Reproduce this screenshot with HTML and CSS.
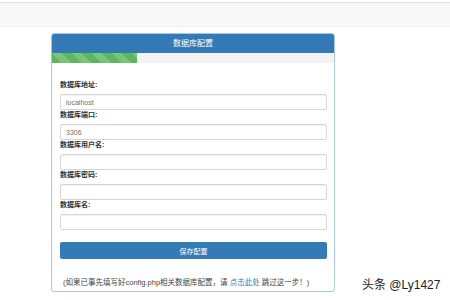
FILE: index.html
```html
<!doctype html>
<html lang="zh-CN">
<head>
  <meta charset="utf-8" />
  <meta name="viewport" content="width=device-width, initial-scale=1" />
  <title>数据库配置</title>
  <link rel="stylesheet" href="styles.css">
</head>

<body>
  <div class="topbar"></div>

  <main class="panel">
    <div class="panelHead">数据库配置</div>
    <div class="progress"><div class="progressBar" style="width:30%"></div></div>

    <form class="panelBody" onsubmit="return false">
      <label class="field">
        <span class="label">数据库地址:</span>
        <input class="input" type="text" value="localhost">
      </label>
      <label class="field">
        <span class="label">数据库端口:</span>
        <input class="input" type="text" value="3306">
      </label>
      <label class="field">
        <span class="label">数据库用户名:</span>
        <input class="input" type="text">
      </label>
      <label class="field">
        <span class="label">数据库密码:</span>
        <input class="input" type="password">
      </label>
      <label class="field">
        <span class="label">数据库名:</span>
        <input class="input" type="text">
      </label>

      <button class="btnSave" type="submit">保存配置</button>

      <p class="note">(如果已事先填写好config.php相关数据库配置，请 <a href="#">点击此处</a> 跳过这一步！)</p>
    </form>
  </main>

  <div class="watermark">头条 @Ly1427</div>
</body>
</html>
```

FILE: styles.css
```css
*{ box-sizing:border-box; }

body{
  margin:0;
  background:#fff;
  color:#333;
  font-family: "Liberation Sans", "Noto Sans CJK SC", sans-serif;
  position:relative;
  height:300px;
  overflow:hidden;
}

.topbar{
  margin-top:2px;
  height:25px;
  background:#f8f8f8;
  border-top:1px solid #e2e2e2;
  border-bottom:1px solid #f0f0f0;
}

.panel{
  width:284px;
  margin:6px 0 0 51px;
  border:1px solid #a9c6e3;
  border-radius:3px;
  overflow:hidden;
}

.panelHead{
  height:19px;
  line-height:19px;
  background:#337ab7;
  color:#fff;
  text-align:center;
  font-size:8px;
}

.progress{
  height:10px;
  background:#f3f3f3;
}
.progressBar{
  height:100%;
  background-color:#5cb85c;
  background-image: linear-gradient(45deg,
    rgba(255,255,255,.18) 25%, transparent 25%,
    transparent 50%, rgba(255,255,255,.18) 50%,
    rgba(255,255,255,.18) 75%, transparent 75%, transparent);
  background-size:20px 20px;
}

.panelBody{
  padding:17px 7px 3px 8px;
  margin:0;
}

.field{
  display:block;
}
.label{
  display:block;
  height:10px;
  line-height:10px;
  margin-bottom:4px;
  font-size:7px;
  font-weight:700;
  color:#333;
}
.input{
  display:block;
  width:100%;
  height:16px;
  margin:0;
  padding:0 5px;
  border:1px solid #d6d6d6;
  border-radius:2px;
  background:#fff;
  font-family:inherit;
  font-size:7px;
  color:#707070;
  box-shadow: inset 0 1px 1px rgba(0,0,0,.05);
}

.btnSave{
  display:block;
  width:100%;
  height:17px;
  margin-top:12px;
  padding:0;
  border:none;
  border-radius:2px;
  background:#337ab7;
  color:#fff;
  font-family:inherit;
  font-size:7px;
  cursor:pointer;
}

.note{
  margin:19px 0 0 0;
  padding-left:3px;
  line-height:10px;
  font-size:7.5px;
  color:#444;
  white-space:nowrap;
}
.note a{
  color:#337ab7;
  text-decoration:none;
}

/* watermark over the page corner */
.watermark{
  position:absolute;
  left:330px;
  top:267px;
  padding:8px 10px 8px 32px;
  background: radial-gradient(closest-side, rgba(255,255,255,.95), rgba(255,255,255,.7) 70%, transparent);
  font-size:12px;
  color:#222;
  white-space:nowrap;
}
```
